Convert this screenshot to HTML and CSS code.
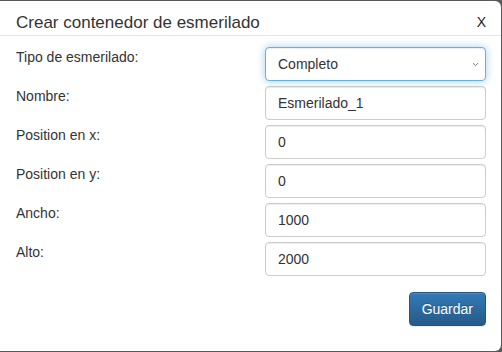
FILE: index.html
```html
<!DOCTYPE html>
<html lang="es">
<head>
<meta charset="utf-8">
<title>Crear contenedor de esmerilado</title>
<link rel="stylesheet" href="styles.css">
</head>
<body>
<div class="modal">
  <div class="modal-header">
    <h4 class="modal-title">Crear contenedor de esmerilado</h4>
    <span class="close">X</span>
  </div>
  <form class="modal-body">
    <div class="row">
      <label class="control-label">Tipo de esmerilado:</label>
      <div class="select-wrap">
        <select class="form-control focused"><option>Completo</option></select>
        <svg class="chev" width="7" height="5" viewBox="0 0 7 5"><path d="M1 1.2 L3.5 3.6 L6 1.2" fill="none" stroke="#777" stroke-width="1"/></svg>
      </div>
    </div>
    <div class="row">
      <label class="control-label">Nombre:</label>
      <input class="form-control" type="text" value="Esmerilado_1">
    </div>
    <div class="row">
      <label class="control-label">Position en x:</label>
      <input class="form-control" type="text" value="0">
    </div>
    <div class="row">
      <label class="control-label">Position en y:</label>
      <input class="form-control" type="text" value="0">
    </div>
    <div class="row">
      <label class="control-label">Ancho:</label>
      <input class="form-control" type="text" value="1000">
    </div>
    <div class="row">
      <label class="control-label">Alto:</label>
      <input class="form-control" type="text" value="2000">
    </div>
    <div class="modal-footer">
      <button type="button" class="btn-primary">Guardar</button>
    </div>
  </form>
</div>
</body>
</html>
```
FILE: styles.css
```css
html, body {
  margin: 0;
  padding: 0;
}
body {
  width: 502px;
  height: 352px;
  background: #5a5a5a;
  font-family: "Liberation Sans", Arial, Helvetica, sans-serif;
  color: #333;
  overflow: hidden;
}
.modal {
  margin-top: 1px;
  width: 501px;
  height: 350px;
  box-sizing: border-box;
  background: #fff;
  border-radius: 0 6px 6px 0;
  display: flex;
  flex-direction: column;
}
.modal-header {
  display: flex;
  justify-content: space-between;
  align-items: flex-start;
  padding: 12px 15px 2px 16px;
  border-bottom: 1px solid #e5e5e5;
}
.modal-title {
  margin: 0;
  font-size: 17px;
  font-weight: normal;
  line-height: 20px;
  color: #333;
}
.close {
  font-size: 14px;
  line-height: 20px;
  margin-top: -1px;
  color: #1a1a1a;
}
.modal-body {
  margin: 0;
  padding: 11px 15px 0 16px;
  display: flex;
  flex-direction: column;
  gap: 5px;
}
.row {
  display: flex;
  align-items: flex-start;
}
.control-label {
  width: 249px;
  font-size: 14px;
  line-height: 20px;
}
.form-control, .select-wrap {
  width: 221px;
  height: 34px;
  box-sizing: border-box;
}
.form-control {
  margin: 0;
  padding: 0 12px;
  border: 1px solid #ccc;
  border-radius: 4px;
  background: #fff;
  font-family: "Liberation Sans", Arial, Helvetica, sans-serif;
  font-size: 14px;
  color: #333;
  box-shadow: inset 0 1px 1px rgba(0,0,0,.075);
  outline: none;
}
.select-wrap {
  position: relative;
}
select.form-control {
  appearance: none;
  -webkit-appearance: none;
  display: block;
}
.focused {
  border-color: #66afe9;
  box-shadow: inset 0 1px 1px rgba(0,0,0,.075), 0 0 8px rgba(102,175,233,.6);
}
.chev {
  position: absolute;
  right: 7px;
  top: 15px;
}
.modal-footer {
  display: flex;
  justify-content: flex-end;
  padding-top: 11px;
}
.btn-primary {
  height: 34px;
  padding: 0 12px;
  border: 1px solid #245580;
  border-radius: 4px;
  background: linear-gradient(to bottom, #337ab7 0, #265a88 100%);
  color: #fff;
  font-family: "Liberation Sans", Arial, Helvetica, sans-serif;
  font-size: 14px;
  text-shadow: 0 -1px 0 rgba(0,0,0,.2);
  box-shadow: inset 0 1px 0 rgba(255,255,255,.15), 0 1px 1px rgba(0,0,0,.075);
}
```
